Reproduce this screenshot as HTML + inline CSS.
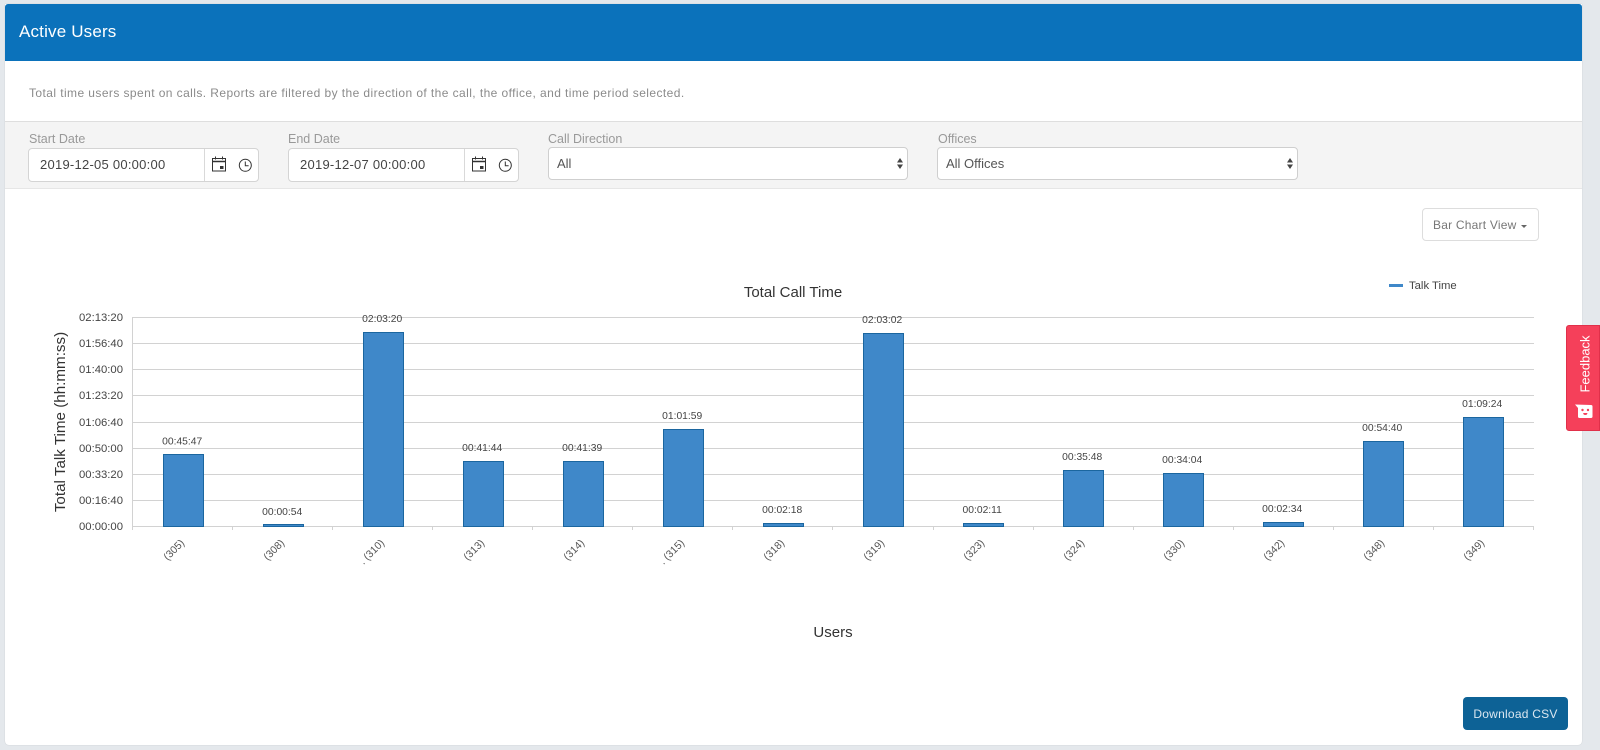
<!DOCTYPE html>
<html lang="en">
<head>
<meta charset="utf-8">
<title>Active Users</title>
<style>
html,body{margin:0;padding:0;width:1600px;height:750px;overflow:hidden;background:#e4e8ec;font-family:"Liberation Sans",Arial,sans-serif}
.abs,.abs *{box-sizing:border-box}
.panel{position:absolute;left:5px;top:4px;width:1577px;height:741px;background:#fff;border-radius:0 0 4px 4px;box-shadow:0 0 1px rgba(0,0,0,.2)}
.head{position:absolute;left:5px;top:4px;width:1577px;height:57px;background:#0b72bb;border-radius:3px 3px 0 0;color:#fff;font-size:17px;letter-spacing:.17px;line-height:55px;padding-left:14px}
.desc{position:absolute;left:29px;top:86px;font-size:12px;color:#8b8b8b;letter-spacing:.42px;white-space:nowrap}
.bar{position:absolute;left:5px;top:121px;width:1577px;height:68px;background:#f4f4f4;border-top:1px solid #dedede;border-bottom:1px solid #e6e6e6;box-sizing:border-box}
.lab{position:absolute;top:132px;font-size:12.5px;color:#999;white-space:nowrap;line-height:15px}
.inp{position:absolute;top:148px;width:231px;height:34px;background:#fff;border:1px solid #d4d4d4;border-radius:4px;box-sizing:border-box;font-size:13px;letter-spacing:.25px;color:#444;line-height:32px;padding-left:11px}
.inp i{position:absolute;left:175px;top:0;bottom:0;width:1px;background:#d9d9d9}
.inp svg{position:absolute;left:180px;top:7px}
.sel{position:absolute;top:147px;height:33px;background:#fff;border:1px solid #cfcfcf;border-radius:4px;box-sizing:border-box;font-size:13px;color:#555;line-height:31px;padding-left:8px}
.sel svg{position:absolute;right:3px;top:9px}
.view{position:absolute;left:1422px;top:208px;width:117px;height:33px;border:1px solid #ddd;border-radius:4px;box-sizing:border-box;font-size:12px;letter-spacing:.22px;color:#777;line-height:32px;padding-left:10px;background:#fff;white-space:nowrap}
.view b{display:inline-block;width:0;height:0;border-left:3.5px solid transparent;border-right:3.5px solid transparent;border-top:3.5px solid #666;margin-left:4px;vertical-align:1px}
.csv{position:absolute;left:1463px;top:697px;width:105px;height:33px;background:#0d6296;border-radius:4px;color:#dbe7f0;font-size:12px;letter-spacing:.25px;text-align:center;line-height:35px}
.fb{position:absolute;left:1566px;top:325px;width:34px;height:106px;background:#f5405a;border-radius:3px 0 0 3px;border:1px solid #e0304a;box-sizing:border-box}
.fb span{position:absolute;left:18px;top:38px;color:#fff;font-size:13px;transform:translate(-50%,-50%) rotate(-90deg);white-space:nowrap}
.fb svg{position:absolute;left:8px;top:78px}
svg.chart{position:absolute;left:0;top:0}
svg.chart text{font-family:"Liberation Sans",Arial,sans-serif}
</style>
</head>
<body>
<div class="abs">
<div class="panel"></div>
<div class="head">Active Users</div>
<div class="desc">Total time users spent on calls. Reports are filtered by the direction of the call, the office, and time period selected.</div>
<div class="bar"></div>

<div class="lab" style="left:29px">Start Date</div>
<div class="inp" style="left:28px">2019-12-05 00:00:00<i></i>
<svg width="46" height="20" viewBox="0 0 46 20" fill="none" stroke="#333"><path d="M3.500 2.500h13v12.500h-13zM9 2.500"/><path d="M3.500 5.500h13" stroke-width="1.500"/><path d="M6.500 0.500v3M13.500 0.500v3"/><rect x="11" y="10" width="3.500" height="3" fill="#333" stroke="none"/><circle cx="36.300" cy="9.300" r="6"/><path d="M36.300 5.500v4.200h3.300"/></svg></div>

<div class="lab" style="left:288px">End Date</div>
<div class="inp" style="left:288px">2019-12-07 00:00:00<i></i>
<svg width="46" height="20" viewBox="0 0 46 20" fill="none" stroke="#333"><path d="M3.500 2.500h13v12.500h-13zM9 2.500"/><path d="M3.500 5.500h13" stroke-width="1.500"/><path d="M6.500 0.500v3M13.500 0.500v3"/><rect x="11" y="10" width="3.500" height="3" fill="#333" stroke="none"/><circle cx="36.300" cy="9.300" r="6"/><path d="M36.300 5.500v4.200h3.300"/></svg></div>

<div class="lab" style="left:548px">Call Direction</div>
<div class="sel" style="left:548px;width:360px">All<svg width="8" height="13" viewBox="0 0 8 13"><path d="M4 1l3 4.500H1zM4 12L1 7.500h6z" fill="#444"/></svg></div>

<div class="lab" style="left:938px">Offices</div>
<div class="sel" style="left:937px;width:361px">All Offices<svg width="8" height="13" viewBox="0 0 8 13"><path d="M4 1l3 4.500H1zM4 12L1 7.500h6z" fill="#444"/></svg></div>

<div class="view">Bar Chart View<b></b></div>

<svg class="chart" width="1600" height="750" viewBox="0 0 1600 750">
<g stroke="#d2d2d2" stroke-width="1" shape-rendering="crispEdges">
<path d="M132 317.500H1534M132 343.500H1534M132 369.500H1534M132 395.500H1534M132 422.500H1534M132 448.500H1534M132 474.500H1534M132 500.500H1534M132 526.500H1534"/>
<path d="M132.500 317V530M232.500 526V530M332.500 526V530M432.500 526V530M532.500 526V530M632.500 526V530M732.500 526V530M832.500 526V530M933.500 526V530M1033.500 526V530M1133.500 526V530M1233.500 526V530M1333.500 526V530M1433.500 526V530M1533.500 526V530"/>
</g>
<g fill="#3f88c9" stroke="#1b669f" stroke-width="1" shape-rendering="crispEdges">
<rect x="163.500" y="454.500" width="40" height="72"/>
<rect x="263.500" y="524.500" width="40" height="2"/>
<rect x="363.500" y="332.500" width="40" height="194"/>
<rect x="463.500" y="461.500" width="40" height="65"/>
<rect x="563.500" y="461.500" width="40" height="65"/>
<rect x="663.500" y="429.500" width="40" height="97"/>
<rect x="763.500" y="523.500" width="40" height="3"/>
<rect x="863.500" y="333.500" width="40" height="193"/>
<rect x="963.500" y="523.500" width="40" height="3"/>
<rect x="1063.500" y="470.500" width="40" height="56"/>
<rect x="1163.500" y="473.500" width="40" height="53"/>
<rect x="1263.500" y="522.500" width="40" height="4"/>
<rect x="1363.500" y="441.500" width="40" height="85"/>
<rect x="1463.500" y="417.500" width="40" height="109"/>
</g>
<g font-size="10.300" fill="#444" text-anchor="middle">
<text x="182.200" y="444.500">00:45:47</text>
<text x="282.200" y="515">00:00:54</text>
<text x="382.200" y="322">02:03:20</text>
<text x="482.200" y="451">00:41:44</text>
<text x="582.200" y="451">00:41:39</text>
<text x="682.200" y="419">01:01:59</text>
<text x="782.200" y="513">00:02:18</text>
<text x="882.200" y="323">02:03:02</text>
<text x="982.200" y="513">00:02:11</text>
<text x="1082.200" y="460">00:35:48</text>
<text x="1182.200" y="463">00:34:04</text>
<text x="1282.200" y="512">00:02:34</text>
<text x="1382.200" y="431">00:54:40</text>
<text x="1482.200" y="407">01:09:24</text>
</g>
<g font-size="11.300" fill="#444" text-anchor="end">
<text x="123" y="321">02:13:20</text>
<text x="123" y="347">01:56:40</text>
<text x="123" y="373">01:40:00</text>
<text x="123" y="399">01:23:20</text>
<text x="123" y="426">01:06:40</text>
<text x="123" y="452">00:50:00</text>
<text x="123" y="478">00:33:20</text>
<text x="123" y="504">00:16:40</text>
<text x="123" y="530">00:00:00</text>
</g>
<g font-size="10.500" fill="#555" text-anchor="end">
<text transform="translate(185 543.500) rotate(-45)">(305)</text>
<text transform="translate(285 543.500) rotate(-45)">(308)</text>
<text transform="translate(385 543.500) rotate(-45)">. (310)</text>
<text transform="translate(485 543.500) rotate(-45)">(313)</text>
<text transform="translate(585 543.500) rotate(-45)">(314)</text>
<text transform="translate(685 543.500) rotate(-45)">. (315)</text>
<text transform="translate(785 543.500) rotate(-45)">(318)</text>
<text transform="translate(885 543.500) rotate(-45)">(319)</text>
<text transform="translate(985 543.500) rotate(-45)">(323)</text>
<text transform="translate(1085 543.500) rotate(-45)">(324)</text>
<text transform="translate(1185 543.500) rotate(-45)">(330)</text>
<text transform="translate(1285 543.500) rotate(-45)">(342)</text>
<text transform="translate(1385 543.500) rotate(-45)">(348)</text>
<text transform="translate(1485 543.500) rotate(-45)">(349)</text>
</g>
<text x="793" y="297" font-size="15" fill="#333" text-anchor="middle">Total Call Time</text>
<text x="833" y="637" font-size="15" fill="#333" text-anchor="middle">Users</text>
<text transform="translate(65 422) rotate(-90)" font-size="15.200" fill="#333" text-anchor="middle">Total Talk Time (hh:mm:ss)</text>
<rect x="1389" y="284" width="14" height="3" fill="#3f88c9"/>
<text x="1409" y="289" font-size="11.300" fill="#444">Talk Time</text>
</svg>

<div class="csv">Download CSV</div>
<div class="fb"><span>Feedback</span>
<svg width="18" height="15" viewBox="0 0 18 15"><path d="M0 0.500L16 1a1.500 1.500 0 0 1 1.500 1.500V12.500A1.500 1.500 0 0 1 16 14H4.500A1.500 1.500 0 0 1 3 12.500V4z" fill="#fff"/><circle cx="7.500" cy="6" r="1.200" fill="#f5405a"/><circle cx="13" cy="6" r="1.200" fill="#f5405a"/><path d="M8.200 9h4.200a2.100 2 0 0 1-4.200 0z" fill="#f5405a"/></svg></div>
</div>
</body>
</html>
